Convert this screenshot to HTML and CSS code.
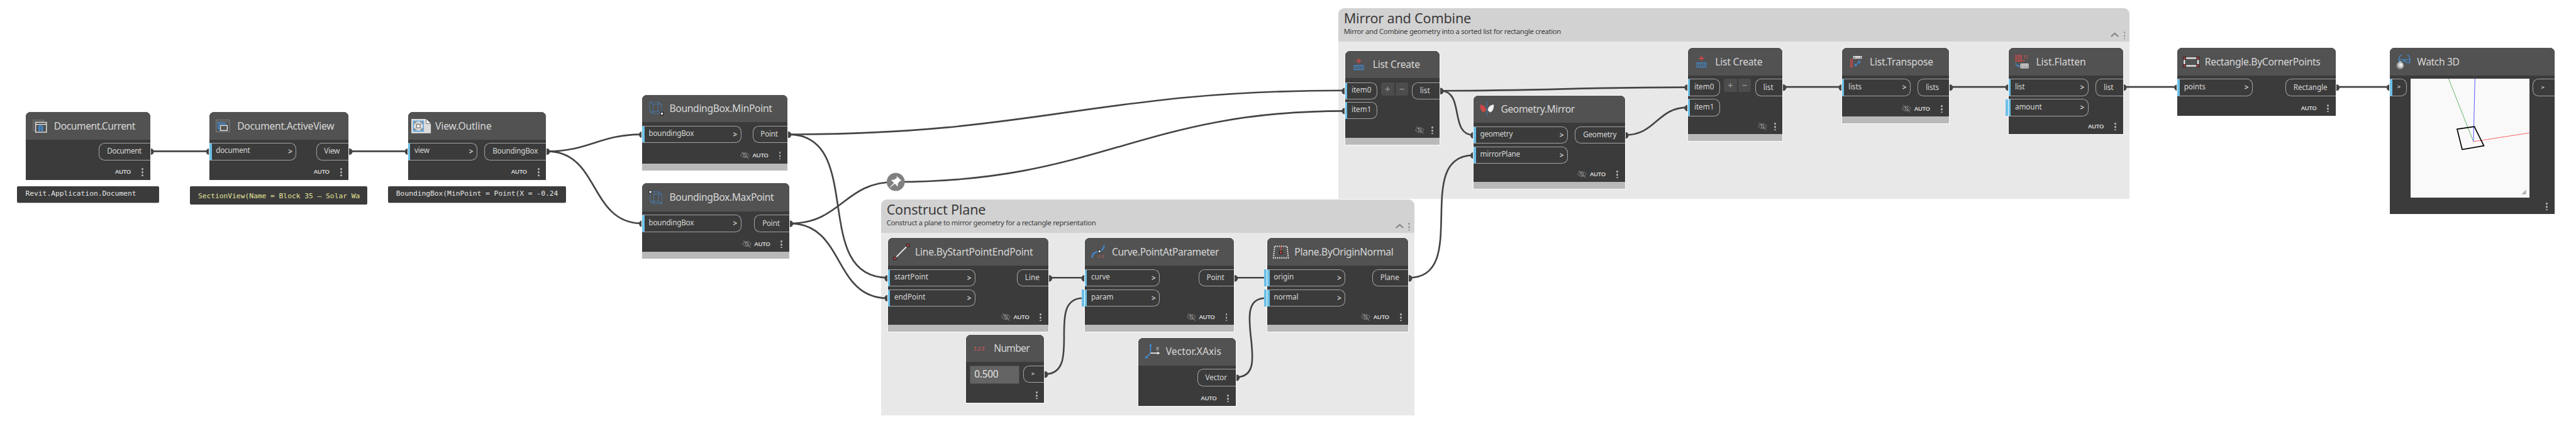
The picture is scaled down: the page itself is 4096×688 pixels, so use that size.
FILE: index.html
```html
<!DOCTYPE html>
<html lang="en">
<head>
<meta charset="utf-8">
<title>Dynamo graph</title>
<link rel="stylesheet" href="styles.css">
</head>
<body>
<svg class="defs" width="0" height="0" aria-hidden="true">
  <symbol id="eye" viewBox="0 0 16 14"><g fill="none" stroke="#9a9a9a" stroke-width="1"><path d="M.8 7C3.8 1.6 12.2 1.6 15.200 7C12.200 12.400 3.800 12.400 .800 7Z" stroke-dasharray="2.200 .7"/><circle cx="8" cy="7" r="2.600"/><path d="M2.200 1L14.300 13.400"/></g></symbol>
  <symbol id="caret" viewBox="0 0 14 9"><path d="M1 7.500L7 2L13 7.500" fill="none" stroke="#858585" stroke-width="2.300"/></symbol>
  <symbol id="list-create" viewBox="0 0 18 20"><path d="M9 0V8M5 4H13" stroke="#c94a48" stroke-width="2"/><path d="M1 11.500H17V19H1ZM4.200 11.500V19M7.400 11.500V19M10.600 11.500V19M13.800 11.500V19" fill="none" stroke="#4389cb" stroke-width="1.300"/></symbol>
  <symbol id="box" viewBox="0 0 22 22"><g fill="none" stroke="#438bd0" stroke-width="1.200" stroke-dasharray="1.300 1"><path d="M1 1H15L21 5V21H7L1 17ZM7 5H21M7 5V21M1 17H15V1M1 1L7 5M15 17L21 21"/></g></symbol>
</svg>
<main class="canvas">
  <section class="group mirror">
    <header><h2>Mirror and Combine</h2><p>Mirror and Combine geometry into a sorted list for rectangle creation</p><svg class="caret"><use href="#caret"/></svg><i class="dots"></i></header>
  </section>
  <section class="group construct">
    <header><h2>Construct Plane</h2><p>Construct a plane to mirror geometry for a rectangle reprsentation</p><svg class="caret"><use href="#caret"/></svg><i class="dots"></i></header>
  </section>

  <svg class="wires" width="4344" height="730" viewBox="0 0 4344 730">
    <g fill="none" stroke="#444" stroke-width="2.800">
      <path d="M254 255H353M589 255H688M1769 468H1829M2082 468H2132M3007 146.500H3106M3288 146.500H3387M3581 146.500H3672M3940 146.500H4030"/>
      <path d="M922 255C995 255 1010 226.500 1083 226.500"/>
      <path d="M922 255C1012 255 993 376.500 1083 376.500"/>
      <path d="M1329 226.500C1753 226.500 1844 152.500 2268 152.500"/>
      <path d="M1329 226.500C1461 226.500 1365 468 1497 468"/>
      <path d="M1332 376.500C1419 376.500 1423 306.500 1510 306.500C1855 306.500 1923 187 2268 187"/>
      <path d="M1332 376.500C1425 376.500 1404 502.500 1497 502.500"/>
      <path d="M1762 630.500C1827 630.500 1762 502.500 1826 502.500"/>
      <path d="M2085 635.500C2149 635.500 2070 502.500 2134 502.500"/>
      <path d="M2376 468C2481 468 2380 261.500 2485 261.500"/>
      <path d="M2429 153C2471 153 2443 227.500 2485 227.500"/>
      <path d="M2429 153C2617 153 2658 147 2846 147"/>
      <path d="M2741 227.500C2792 227.500 2795 181 2846 181"/>
    </g>
    <g fill="#444">
      <circle cx="254" cy="255.500" r="5.500"/><circle cx="353" cy="255.500" r="5.500"/><circle cx="589" cy="255.500" r="5.500"/><circle cx="688" cy="255.500" r="5.500"/><circle cx="922" cy="255.500" r="5.500"/>
      <circle cx="1083" cy="227" r="5.500"/><circle cx="1083" cy="377" r="5.500"/><circle cx="1329" cy="227" r="5.500"/><circle cx="1332" cy="377" r="5.500"/>
      <circle cx="1497" cy="469" r="5.500"/><circle cx="1497" cy="502.500" r="5.500"/><circle cx="1769" cy="469" r="5.500"/><circle cx="1829" cy="469" r="5.500"/><circle cx="2082" cy="469" r="5.500"/><circle cx="2376" cy="469" r="5.500"/>
      <circle cx="1762" cy="631" r="5.500"/><circle cx="2085" cy="636.500" r="5.500"/>
      <circle cx="2268" cy="153.500" r="5.500"/><circle cx="2268" cy="187" r="5.500"/><circle cx="2429" cy="153.500" r="5.500"/>
      <circle cx="2485" cy="228" r="5.500"/><circle cx="2485" cy="262" r="5.500"/><circle cx="2741" cy="228" r="5.500"/>
      <circle cx="2846" cy="147.500" r="5.500"/><circle cx="2846" cy="182" r="5.500"/><circle cx="3007" cy="147.500" r="5.500"/><circle cx="3106" cy="147.500" r="5.500"/><circle cx="3288" cy="147.500" r="5.500"/><circle cx="3387" cy="147.500" r="5.500"/><circle cx="3581" cy="147.500" r="5.500"/><circle cx="3672" cy="147.500" r="5.500"/><circle cx="3940" cy="147.500" r="5.500"/><circle cx="4030" cy="147.500" r="5.500"/>
    </g>
    <g transform="translate(1510.500 306.500)"><circle r="15.200" fill="#808080"/><path d="M1.500 -10L10 -1.500L7 -1.500L3.500 3L3.500 8L-8 -3.500L-3 -3.500L2 -7ZM-3 1.500L-1.500 3L-9.500 9.500L-10 9Z" fill="#fff"/></g>
  </svg>

  <article class="node doc-current">
    <header><svg class="icon" viewBox="0 0 24 22"><path d="M4 18H.7V.7H18V3M6 19.500H2.500V2.500H20" fill="none" stroke="#777" stroke-width="1"/><path d="M5 4.700H23.200V21.300H5ZM5 8H23.200" fill="none" stroke="#eee" stroke-width="1.400"/><path d="M11 20V11.500H15.200A2.400 2.400 0 0 1 15 16H13M14 16L17 20" fill="none" stroke="#438bd0" stroke-width="2.600"/></svg><h3>Document.Current</h3></header>
    <div class="ports"><div class="outs"><span class="out">Document</span></div></div>
    <footer><b>AUTO</b><i class="dots"></i></footer>
  </article>
  <div class="bubble b1">Revit.Application.Document</div>

  <article class="node doc-active">
    <header><svg class="icon" viewBox="0 0 24 22"><path d="M.7 .7H23.300V20.500H.7ZM.7 4H23.300" fill="none" stroke="#7c7c7c" stroke-width="1.200"/><path d="M5 15H3.500V5.500H15V7M7 16.500H5.500V7.500H17V9" fill="none" stroke="#3f88cf" stroke-width="1.300"/><path d="M8 10H19.500V18.500H8Z" fill="#555" stroke="#eee" stroke-width="1.400"/></svg><h3>Document.ActiveView</h3></header>
    <div class="ports"><div class="ins"><span class="in">document<em>&gt;</em></span></div><div class="outs"><span class="out">View</span></div></div>
    <footer><b>AUTO</b><i class="dots"></i></footer>
  </article>
  <div class="bubble b2">SectionView(Name = Block 35 – Solar Wa</div>

  <article class="node outline">
    <header><svg class="icon" viewBox="0 0 33 24"><path d="M0 0H24L33 8V24H0Z" fill="#dcdcdc"/><path d="M25 0V8H33" fill="#f4f4f4" stroke="#666" stroke-width="1"/><path d="M3.500 3.500H20.500V20.500H3.500Z" fill="#ddd" stroke="#2e93e8" stroke-width="1.200"/><path d="M5.500 9V5.500H9M15 5.500H18.500V9M18.500 15V18.500H15M9 18.500H5.500V15" fill="none" stroke="#666" stroke-width="1.300"/><path d="M9 9H15V15H9Z" fill="#fff" stroke="#777" stroke-width="1.400"/></svg><h3>View.Outline</h3></header>
    <div class="ports"><div class="ins"><span class="in">view<em>&gt;</em></span></div><div class="outs"><span class="out">BoundingBox</span></div></div>
    <footer><b>AUTO</b><i class="dots"></i></footer>
  </article>
  <div class="bubble b3">BoundingBox(MinPoint = Point(X = -0.24</div>

  <article class="node frozen min-point">
    <header><svg class="icon" viewBox="0 0 25 24"><use href="#box" width="22" height="22"/><path d="M19.500 18.500H24V23H19.500Z" fill="#fff" stroke="#222" stroke-width="1.200"/></svg><h3>BoundingBox.MinPoint</h3></header>
    <div class="ports"><div class="ins"><span class="in">boundingBox<em>&gt;</em></span></div><div class="outs"><span class="out">Point</span></div></div>
    <footer><svg class="eye"><use href="#eye"/></svg><b>AUTO</b><i class="dots"></i></footer>
  </article>
  <article class="node frozen max-point">
    <header><svg class="icon" viewBox="0 0 25 24"><use href="#box" x="2" y="2" width="22" height="22"/><path d="M1 1H5.500V5.500H1Z" fill="#fff" stroke="#222" stroke-width="1.200"/></svg><h3>BoundingBox.MaxPoint</h3></header>
    <div class="ports"><div class="ins"><span class="in">boundingBox<em>&gt;</em></span></div><div class="outs"><span class="out">Point</span></div></div>
    <footer><svg class="eye"><use href="#eye"/></svg><b>AUTO</b><i class="dots"></i></footer>
  </article>

  <article class="node frozen line">
    <header><svg class="icon" viewBox="0 0 28 28"><path d="M3 25L25 3" stroke="#eee" stroke-width="2"/><path d="M.8 22.800H5.200V27.200H.8ZM22.800 .8H27.200V5.200H22.800Z" fill="#c94a48" stroke="#2a2020" stroke-width="1.200"/></svg><h3>Line.ByStartPointEndPoint</h3></header>
    <div class="ports"><div class="ins"><span class="in">startPoint<em>&gt;</em></span><span class="in">endPoint<em>&gt;</em></span></div><div class="outs"><span class="out">Line</span></div></div>
    <footer><svg class="eye"><use href="#eye"/></svg><b>AUTO</b><i class="dots"></i></footer>
  </article>
  <article class="node frozen curve">
    <header><svg class="icon" viewBox="0 0 24 24"><path d="M1.500 22C2 13 8 11.500 13 11S21.500 6 22 1" fill="none" stroke="#438bd0" stroke-width="2.200"/><path d="M12 8.800H16.200V13H12Z" fill="#fff" stroke="#222" stroke-width="1.200"/><text class="icon-text small" x="10.500" y="22.500">0.6</text></svg><h3>Curve.PointAtParameter</h3></header>
    <div class="ports"><div class="ins"><span class="in">curve<em>&gt;</em></span><span class="in tab">param<em>&gt;</em></span></div><div class="outs"><span class="out">Point</span></div></div>
    <footer><svg class="eye"><use href="#eye"/></svg><b>AUTO</b><i class="dots"></i></footer>
  </article>
  <article class="node frozen plane">
    <header><svg class="icon" viewBox="0 0 28 24"><path d="M4 2.500H25L27 22H2Z" fill="none" stroke="#eee" stroke-width="2" stroke-dasharray="2 1.600"/><path d="M14.500 1V13" stroke="#c94a48" stroke-width="1.400"/><path d="M12.200 10.800H16.700V15.300H12.200Z" fill="#c94a48" stroke="#2a2020" stroke-width="1.300"/></svg><h3>Plane.ByOriginNormal</h3></header>
    <div class="ports"><div class="ins"><span class="in tab">origin<em>&gt;</em></span><span class="in tab">normal<em>&gt;</em></span></div><div class="outs"><span class="out">Plane</span></div></div>
    <footer><svg class="eye"><use href="#eye"/></svg><b>AUTO</b><i class="dots"></i></footer>
  </article>
  <article class="node number">
    <header><svg class="icon" viewBox="0 0 20 12"><text class="icon-text" x="0" y="10">123</text></svg><h3>Number</h3></header>
    <div class="ports"><span class="field">0.500</span><div class="outs"><span class="out bare">&gt;</span></div></div>
    <footer><i class="dots"></i></footer>
  </article>
  <article class="node vector">
    <header><svg class="icon" viewBox="0 0 26 26"><path d="M10 16V3M10 16L2 24" stroke="#438bd0" stroke-width="1.800"/><path d="M10 0L12.500 4H7.500ZM.5 25.500L2 20.500L5.500 24Z" fill="#438bd0"/><path d="M10 16H22" stroke="#eee" stroke-width="1.800"/><path d="M26 16L21.500 18.500V13.500Z" fill="#eee"/><path d="M19.800 5.500L24 11M24 5.500L19.800 11" stroke="#aaa" stroke-width="1.200"/></svg><h3>Vector.XAxis</h3></header>
    <div class="ports"><div class="outs"><span class="out">Vector</span></div></div>
    <footer><b>AUTO</b><i class="dots"></i></footer>
  </article>

  <article class="node frozen list-one">
    <header><svg class="icon"><use href="#list-create"/></svg><h3>List Create</h3></header>
    <div class="ports"><div class="ins"><span class="in">item0</span><span class="in">item1</span></div><div class="step"><span>+</span><span>−</span></div><div class="outs"><span class="out">list</span></div></div>
    <footer><svg class="eye"><use href="#eye"/></svg><i class="dots"></i></footer>
  </article>
  <article class="node frozen geo-mirror">
    <header><svg class="icon" viewBox="0 0 24 24"><path d="M.5 4.500C7 5 10.500 9 10.500 14L7 17.500C2.500 17 0 11 .5 4.500Z" fill="#c94a48"/><path d="M23.500 4.500C17 5 13.500 9 13.500 14L17 17.500C21.500 17 24 11 23.500 4.500Z" fill="#f0f0f0"/><path d="M12 0V24" stroke="#3f88cf" stroke-width="1.300" stroke-dasharray="2.500 1.500"/></svg><h3>Geometry.Mirror</h3></header>
    <div class="ports"><div class="ins"><span class="in">geometry<em>&gt;</em></span><span class="in">mirrorPlane<em>&gt;</em></span></div><div class="outs"><span class="out">Geometry</span></div></div>
    <footer><svg class="eye"><use href="#eye"/></svg><b>AUTO</b><i class="dots"></i></footer>
  </article>
  <article class="node frozen list-two">
    <header><svg class="icon"><use href="#list-create"/></svg><h3>List Create</h3></header>
    <div class="ports"><div class="ins"><span class="in">item0</span><span class="in">item1</span></div><div class="step"><span>+</span><span>−</span></div><div class="outs"><span class="out">list</span></div></div>
    <footer><svg class="eye"><use href="#eye"/></svg><i class="dots"></i></footer>
  </article>
  <article class="node frozen transpose">
    <header><svg class="icon" viewBox="0 0 20 20"><path d="M.7 5.700H3.500V19H.7ZM.7 8.500H3.500M.7 11H3.500M.7 13.500H3.500M.7 16H3.500" fill="none" stroke="#c94a48" stroke-width="1.200"/><path d="M5.700 .7H19V4H5.700ZM8 2.300H17" fill="none" stroke="#eee" stroke-width="1.200"/><path d="M9 15.500L15 10" stroke="#438bd0" stroke-width="1.500"/><path d="M7 17.500L8 12.500L12 16.500ZM17.300 8L16.300 13L12.300 9Z" fill="#438bd0"/></svg><h3>List.Transpose</h3></header>
    <div class="ports"><div class="ins"><span class="in">lists<em>&gt;</em></span></div><div class="outs"><span class="out">lists</span></div></div>
    <footer><svg class="eye"><use href="#eye"/></svg><b>AUTO</b><i class="dots"></i></footer>
  </article>
  <article class="node flatten">
    <header><svg class="icon" viewBox="0 0 23 23"><path d="M.8 .8H3V3H.8ZM5 .8H7.200V3H5ZM9.200 .8H11.400V3H9.200ZM.8 5H3V7.200H.8ZM5 5H7.200V7.200H5ZM9.200 5H11.400V7.200H9.200ZM.8 9.200H3V11.400H.8ZM5 9.200H7.200V11.400H5ZM9.200 9.200H11.400V11.400H9.200Z" fill="none" stroke="#c04b4a" stroke-width="1.200"/><path d="M13.500 9.200H16V11.400H13.500Z" fill="#c04b4a"/><path d="M16.500 7V1.500H20.500V7" fill="none" stroke="#a05655" stroke-width="1.500"/><path d="M1 14C1.500 17.500 3.500 19 6 19" fill="none" stroke="#438bd0" stroke-width="1.500"/><path d="M8.500 19L5 16.500V21.500Z" fill="#438bd0"/><path d="M9.700 15.500H22.300V22.300H9.700ZM9.700 18.900H22.300M12.200 15.500V22M14.700 15.500V22M17.200 15.500V22M19.700 15.500V22" fill="none" stroke="#eee" stroke-width="1.200"/></svg><h3>List.Flatten</h3></header>
    <div class="ports"><div class="ins"><span class="in">list<em>&gt;</em></span><span class="in tab">amount<em>&gt;</em></span></div><div class="outs"><span class="out">list</span></div></div>
    <footer><b>AUTO</b><i class="dots"></i></footer>
  </article>

  <article class="node rectangle">
    <header><svg class="icon" viewBox="0 0 28 18"><path d="M2.500 2.500H25.500V15.500H2.500Z" fill="none" stroke="#eee" stroke-width="2.200"/><path d="M.7 .7H4.700V4.700H.7ZM23.300 .7H27.300V4.700H23.300ZM.7 13.300H4.700V17.300H.7ZM23.300 13.300H27.300V17.300H23.300Z" fill="#c94a48" stroke="#3a2626" stroke-width="1.300"/></svg><h3>Rectangle.ByCornerPoints</h3></header>
    <div class="ports"><div class="ins"><span class="in">points<em>&gt;</em></span></div><div class="outs"><span class="out">Rectangle</span></div></div>
    <footer><b>AUTO</b><i class="dots"></i></footer>
  </article>

  <article class="node watch">
    <header><svg class="icon" viewBox="0 0 24 26"><defs><radialGradient id="ball" cx=".6" cy=".4" r=".6"><stop offset="0" stop-color="#fff"/><stop offset=".45" stop-color="#ccc"/><stop offset="1" stop-color="#777"/></radialGradient></defs><path d="M9.500 1C6.500 2 5 5 5 9.500M18.500 1C21.500 2 23 5 23 9.500M4.500 9.500H23.200V14.500H18L14 10.500L10 14.500H5Z" fill="none" stroke="#438bd0" stroke-width="1.400"/><circle cx="6.500" cy="19.500" r="6.300" fill="url(#ball)"/><circle cx="7" cy="13.500" r="2" fill="#bbb"/></svg><h3>Watch 3D</h3></header>
    <div class="ports"><div class="ins"><span class="in"><em>&gt;</em></span></div>
      <svg class="view" viewBox="0 0 200 200" fill="none"><path d="M64 0L106 106" stroke="#5cae5c"/><path d="M108.500 0L106 106" stroke="#6a6aff" stroke-width="1.200"/><path d="M106 106L200 91.500" stroke="#ff5a5a"/><path d="M78.500 85L107.500 80.800L123.500 113L87 119.300Z" stroke="#000" stroke-width="1.800"/><path d="M194.700 187V195H187Z" fill="#b0b0b0"/></svg>
      <div class="outs"><span class="out bare">&gt;</span></div></div>
    <footer><i class="dots"></i></footer>
  </article>
</main>
</body>
</html>
```
FILE: styles.css
```css
* { box-sizing: border-box; }
html, body { margin: 0; overflow: hidden; background: #fff; }
body { font-family: "Noto Sans", "Open Sans", sans-serif; }
h2, h3, p { margin: 0; font-weight: 400; white-space: nowrap; }
.defs { position: absolute; }

/* The whole graph is laid out on a 4344 x 730 canvas */
.canvas { position: relative; width: 4344px; height: 730px; overflow: hidden; zoom: 0.94291; }
.wires { position: absolute; left: 0; top: 0; }

.dots { flex: none; width: 3px; height: 14px; background: radial-gradient(circle, #b0b0b0 1.5px, transparent 1.8px) 0 0 / 3px 5.500px; }

/* Groups */
.group { position: absolute; background: #e8e8e8; border-radius: 10px 10px 0 0; }
.group header { display: grid; grid-template-columns: 1fr auto auto; grid-template-rows: 34px 22px; align-items: center; height: 56px; padding: 0 7px 0 9px; background: #d2d2d2; border-radius: 10px 10px 0 0; color: #3c3c3c; }
.group h2 { grid-column: 1 / 4; font-size: 23px; line-height: 34px; letter-spacing: -0.24px; }
.group p { padding-bottom: 12px; font-size: 12px; line-height: 17px; letter-spacing: -0.35px; }
.caret { width: 14px; height: 9px; margin-right: 8px; }
.group .dots { background-image: radial-gradient(circle, #888 1.200px, transparent 1.600px); }
.mirror { left: 2257px; top: 14px; width: 1334px; height: 321px; }
.construct { left: 1486px; top: 336px; width: 899px; height: 364px; }

/* Nodes */
.node { position: absolute; display: flex; flex-direction: column; background: #3b3b3b; border-radius: 8px 8px 0 0; box-shadow: 0 0 0 1px #fbfbfb; color: #d8d8d8; }
.node > header { flex: none; display: flex; align-items: center; height: var(--head, 46px); padding-left: var(--icon-x, 10px); background: #525252; border-radius: 8px 8px 0 0; }
.frozen { border-bottom: 12px solid #b9b9b9; }
.icon { flex: none; width: var(--icon-w, 24px); height: var(--icon-h, 24px); margin-right: var(--gap, 12px); overflow: visible; }
.node h3 { font-size: 16.600px; line-height: 24px; letter-spacing: var(--track, -0.38px); }
.ports { display: flex; align-items: flex-start; padding-top: 6px; }
.ins { display: flex; flex-direction: column; gap: 5px; }
.outs { margin-left: auto; }
.in, .out { display: flex; align-items: center; height: 29px; border: 1px solid #a3a3a3; font-size: 12.400px; line-height: 18px; letter-spacing: var(--port-track, -0.22px); white-space: nowrap; }
.in { position: relative; width: var(--in); justify-content: space-between; padding: 0 6px 2px 11px; border-left: 0; border-radius: 0 10px 10px 0; }
.in::before { content: ""; position: absolute; left: 0; top: 0; width: 4px; height: 27px; background: #6ac0e7; }
.in.tab::after { content: ""; position: absolute; left: -5px; top: -1px; width: 4px; height: 28px; background: #6ac0e7; }
.in em { font-style: normal; font-size: 12.500px; font-weight: 600; padding-top: 1px; }
.out { width: var(--out); padding: 0 0 0 12.500px; border-right: 0; border-radius: 10px 0 0 10px; }
.out.bare { font-size: 10px; font-weight: 600; }
.node footer { display: flex; justify-content: flex-end; align-items: center; height: 27px; margin-top: auto; padding-right: 11.500px; gap: 18px; }
.node footer b { font-size: 10.300px; line-height: 14px; font-weight: 600; letter-spacing: -0.45px; }
.eye { width: 16px; height: 14px; margin-right: -13px; }
.eye:nth-last-child(2) { margin-right: -6.500px; }

/* Value previews */
.bubble { position: absolute; height: 27px; padding-left: 14px; border-radius: 2px; background: #3b3b3b; color: #e6e6e6; font: 12px/26px "DejaVu Sans Mono", monospace; letter-spacing: -0.03px; white-space: pre; box-shadow: 0 1px 0 #c4c4c4; }
.b1 { left: 29px; top: 314px; width: 239px; }
.b2 { left: 320px; top: 314px; width: 299px; height: 31px; line-height: 34px; color: #e3e398; box-shadow: none; }
.b3 { left: 654px; top: 314px; width: 300px; }

.doc-current { left: 44px; top: 189px; width: 209px; height: 114px; --icon-x: 11px; --icon-h: 22px; --out: 86px; --track: -0.49px; --port-track: -0.36px; }
.doc-active { left: 353px; top: 189px; width: 235px; height: 114px; --icon-x: 11px; --icon-h: 22px; --in: 147px; --out: 55px; --track: -0.28px; }
.outline { left: 688px; top: 189px; width: 233px; height: 114px; --icon-x: 6px; --icon-w: 33px; --gap: 7px; --in: 117px; --out: 104px; --track: -0.14px; }
.min-point { left: 1083px; top: 160px; width: 245px; height: 127px; --icon-x: 12px; --icon-w: 25px; --gap: 9px; --in: 167px; --out: 59px; --track: -0.36px; }
.max-point { left: 1083px; top: 309px; width: 248px; height: 127px; --head: 47px; --icon-x: 10px; --icon-w: 25px; --gap: 11px; --in: 167px; --out: 59px; --track: -0.39px; }
.line { left: 1497px; top: 401px; width: 271px; height: 158px; --head: 47px; --icon-x: 9px; --icon-w: 28px; --icon-h: 28px; --gap: 9px; --in: 148px; --out: 53px; --track: -0.22px; --port-track: 0; }
.curve { left: 1829px; top: 401px; width: 252px; height: 158px; --head: 47px; --icon-x: 11px; --gap: 11px; --in: 127px; --out: 60px; --track: -0.4px; --port-track: -0.07px; }
.plane { left: 2137px; top: 401px; width: 238px; height: 158px; --head: 47px; --icon-x: 9px; --icon-w: 28px; --gap: 9px; --in: 132px; --out: 61px; --track: -0.39px; --port-track: -0.1px; }
.number { left: 1629px; top: 564px; width: 132px; height: 115px; --icon-x: 13px; --icon-w: 20px; --icon-h: 12px; --gap: 14px; --out: 36px; --track: -0.8px; }
.vector { left: 1920px; top: 569px; width: 164px; height: 115px; --head: 47px; --icon-w: 26px; --icon-h: 26px; --gap: 10px; --out: 65px; --track: 0.05px; --port-track: -0.1px; }
.list-one { left: 2268px; top: 86px; width: 160px; height: 158px; --icon-x: 14px; --icon-w: 18px; --icon-h: 20px; --gap: 15px; --in: 55px; --out: 47px; --track: -0.25px; --port-track: 0; }
.geo-mirror { left: 2485px; top: 161px; width: 255px; height: 157px; --icon-x: 11px; --gap: 11px; --in: 159px; --out: 84px; --track: -0.44px; }
.list-two { left: 2846px; top: 81px; width: 160px; height: 157px; --icon-x: 14.500px; --icon-w: 18px; --icon-h: 20px; --gap: 14px; --in: 55px; --out: 46px; --track: -0.25px; --port-track: 0; }
.transpose { left: 3106px; top: 81px; width: 181px; height: 127px; --icon-x: 14px; --icon-w: 20px; --icon-h: 20px; --gap: 13px; --in: 116px; --out: 53px; --track: -0.23px; --port-track: -0.1px; }
.flatten { left: 3387px; top: 81px; width: 193px; height: 145px; --icon-x: 11px; --icon-w: 23px; --icon-h: 23px; --gap: 12.500px; --in: 135px; --out: 46px; --track: -0.1px; --port-track: -0.1px; }
.rectangle { left: 3672px; top: 81px; width: 267px; height: 114px; --icon-x: 9px; --icon-w: 28px; --icon-h: 18px; --gap: 9px; --in: 127px; --out: 85px; --track: -0.34px; --port-track: -0.06px; }
.watch { left: 4030px; top: 81px; width: 278px; height: 280px; --icon-x: 11px; --icon-h: 26px; --gap: 11px; --in: 29px; --out: 37px; }

.list-one .ports { padding-top: 7px; }
.list-one .ins { gap: 4px; }
.step { display: flex; gap: 2px; margin-left: 6px; }
.step span { width: 22px; height: 22px; background: #4c4c4c; color: #9a9a9a; font-size: 16px; line-height: 22px; font-weight: 500; text-align: center; }
.step span:first-child { border-radius: 4px 0 0 4px; }
.step span:last-child { border-radius: 0 4px 4px 0; }
.field { flex: none; width: 84px; height: 31px; margin-left: 6px; padding-left: 7px; border: 1px solid #4e4e4e; background: #646464; color: #e4e4e4; font-size: 16.400px; line-height: 27px; letter-spacing: -0.3px; }
.number .out, .watch .out { padding-left: 13px; }
.watch .in { padding: 0 0 2px 12.500px; }
.watch .in em { font-size: 10px; }
.watch .view { width: 200px; height: 200px; margin-left: 6px; background: #f9f9f9; }
.icon-text { font: 700 10px "Liberation Sans", sans-serif; letter-spacing: 1px; fill: #b05856; }
.icon-text.small { font-size: 8.500px; font-weight: 400; letter-spacing: 0; }
```
